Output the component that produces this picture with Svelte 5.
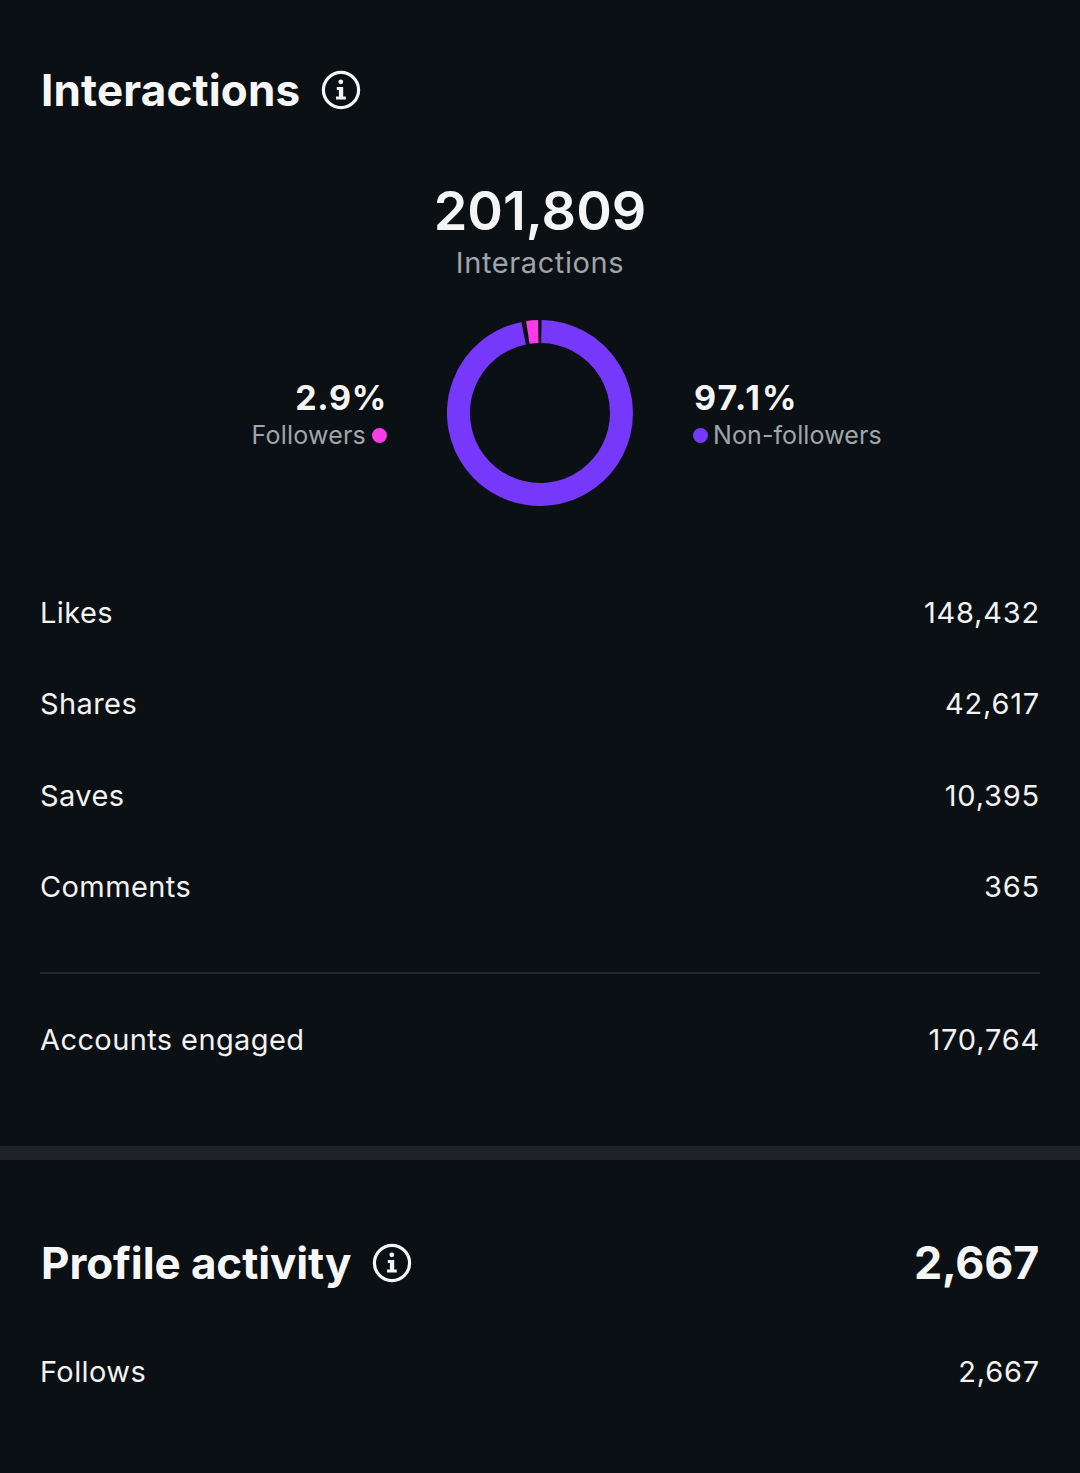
<script>
  const cx = 93, cy = 93, r = 81.5;
  function arc(a0, a1) {
    const p = (a) => {
      const t = (a * Math.PI) / 180;
      return `${(cx + r * Math.sin(t)).toFixed(2)} ${(cy - r * Math.cos(t)).toFixed(2)}`;
    };
    const large = a1 - a0 > 180 ? 1 : 0;
    return `M${p(a0)} A${r} ${r} 0 ${large} 1 ${p(a1)}`;
  }
  const rows = [
    ['Likes', '148,432'],
    ['Shares', '42,617'],
    ['Saves', '10,395'],
    ['Comments', '365']
  ];
</script>

{#snippet info()}
  <svg class="info" viewBox="0 0 40 40" width="40" height="40" aria-hidden="true">
    <circle cx="20" cy="20" r="17.6" fill="none" stroke="#f5f5f5" stroke-width="3.2" />
    <circle cx="19.8" cy="11.8" r="2.4" fill="#f5f5f5" />
    <path d="M15.8 17h6.4v9.4h2.6v3h-9.8v-3h2.9v-6.4h-2.1z" fill="#f5f5f5" />
  </svg>
{/snippet}

<main>
  <section class="interactions">
    <header class="title">
      <h2 class="wide">Interactions</h2>
      {@render info()}
    </header>

    <div class="total">
      <strong>201,809</strong>
      <span>Interactions</span>
    </div>

    <div class="chart">
      <div class="legend left">
        <b>2.9%</b>
        <span>Followers<i class="dot pink"></i></span>
      </div>
      <svg class="donut" viewBox="0 0 186 186" width="186" height="186" aria-hidden="true">
        <path d={arc(1, 348.4)} fill="none" stroke="#7638fa" stroke-width="23" />
        <path d={arc(-8.6, -1.2)} fill="none" stroke="#fb3ce6" stroke-width="23" />
      </svg>
      <div class="legend right">
        <b>97.1%</b>
        <span><i class="dot purple"></i>Non-followers</span>
      </div>
    </div>

    <ul class="rows">
      {#each rows as [label, value]}
        <li><span>{label}</span><span class="num">{value}</span></li>
      {/each}
    </ul>

    <hr />

    <div class="row engaged"><span>Accounts engaged</span><span class="num">170,764</span></div>
  </section>

  <section class="profile">
    <header class="title spread">
      <div class="title">
        <h2>Profile activity</h2>
        {@render info()}
      </div>
      <strong>2,667</strong>
    </header>
    <div class="row follows"><span>Follows</span><span class="num">2,667</span></div>
  </section>
</main>

<style>
  :global(body) {
    margin: 0;
    background: #0b1014;
  }
  main {
    min-height: 1473px;
    background: #0b1014;
    color: #f5f5f5;
    font-family: Inter, "Liberation Sans", sans-serif;
  }
  .interactions {
    padding: 64px 40px 0;
    box-sizing: border-box;
    border-bottom: 14px solid #1f2327;
    height: 1160px;
  }
  .title {
    display: flex;
    align-items: center;
    gap: 21px;
    height: 52px;
    margin-left: 1px;
  }
  .title .title {
    margin-left: 0;
  }
  .title.spread {
    justify-content: space-between;
  }
  h2 {
    margin: 0;
    font-size: 44px;
    font-weight: 700;
    letter-spacing: -0.1px;
    line-height: 52px;
    color: #f7f7f7;
  }
  h2.wide {
    letter-spacing: 0.15px;
  }
  .info {
    flex: none;
  }
  .total {
    margin-top: 65px;
    display: flex;
    flex-direction: column;
    align-items: center;
  }
  .total strong {
    font-size: 54px;
    font-weight: 600;
    line-height: 60px;
  }
  .total span {
    font-size: 29px;
    line-height: 40px;
    letter-spacing: 0.6px;
    color: #a0a4ab;
    margin-top: 2px;
  }
  .chart {
    margin-top: 37px;
    display: grid;
    grid-template-columns: 1fr 186px 1fr;
    column-gap: 60px;
    align-items: center;
    margin-left: -40px;
    margin-right: -40px;
  }
  .legend {
    display: flex;
    flex-direction: column;
    margin-bottom: -4px;
  }
  .legend b {
    font-size: 34px;
    font-weight: 700;
    line-height: 40px;
    letter-spacing: 0.7px;
  }
  .legend span {
    display: flex;
    align-items: center;
    gap: 6px;
    font-size: 25px;
    line-height: 34px;
    color: #a0a4ab;
    letter-spacing: 0.2px;
  }
  .legend.left {
    align-items: flex-end;
  }
  .legend.right {
    align-items: flex-start;
  }
  .legend.right b {
    letter-spacing: 2px;
    margin-left: 1px;
  }
  .legend.right span {
    gap: 5px;
    letter-spacing: 0.1px;
  }
  .dot {
    width: 15px;
    height: 15px;
    border-radius: 50%;
    flex: none;
  }
  .pink {
    background: #fb3ce6;
  }
  .purple {
    background: #7638fa;
  }
  .rows {
    list-style: none;
    margin: 87px 0 0;
    padding: 0;
    display: flex;
    flex-direction: column;
    gap: 51.3px;
  }
  .rows li,
  .row {
    display: flex;
    justify-content: space-between;
    font-size: 29px;
    line-height: 40px;
    letter-spacing: 0.4px;
    color: #f2f2f2;
  }
  .num {
    letter-spacing: 0.8px;
  }
  hr {
    margin: 65px 0 0;
    border: 0;
    border-top: 2px solid #24282c;
  }
  .engaged {
    margin-top: 46px;
  }
  .profile {
    padding: 77px 40px 0;
  }
  .profile .title strong {
    font-size: 44.8px;
    font-weight: 700;
    letter-spacing: -0.2px;
    margin-right: 1px;
  }
  .follows {
    margin-top: 63px;
  }
</style>
